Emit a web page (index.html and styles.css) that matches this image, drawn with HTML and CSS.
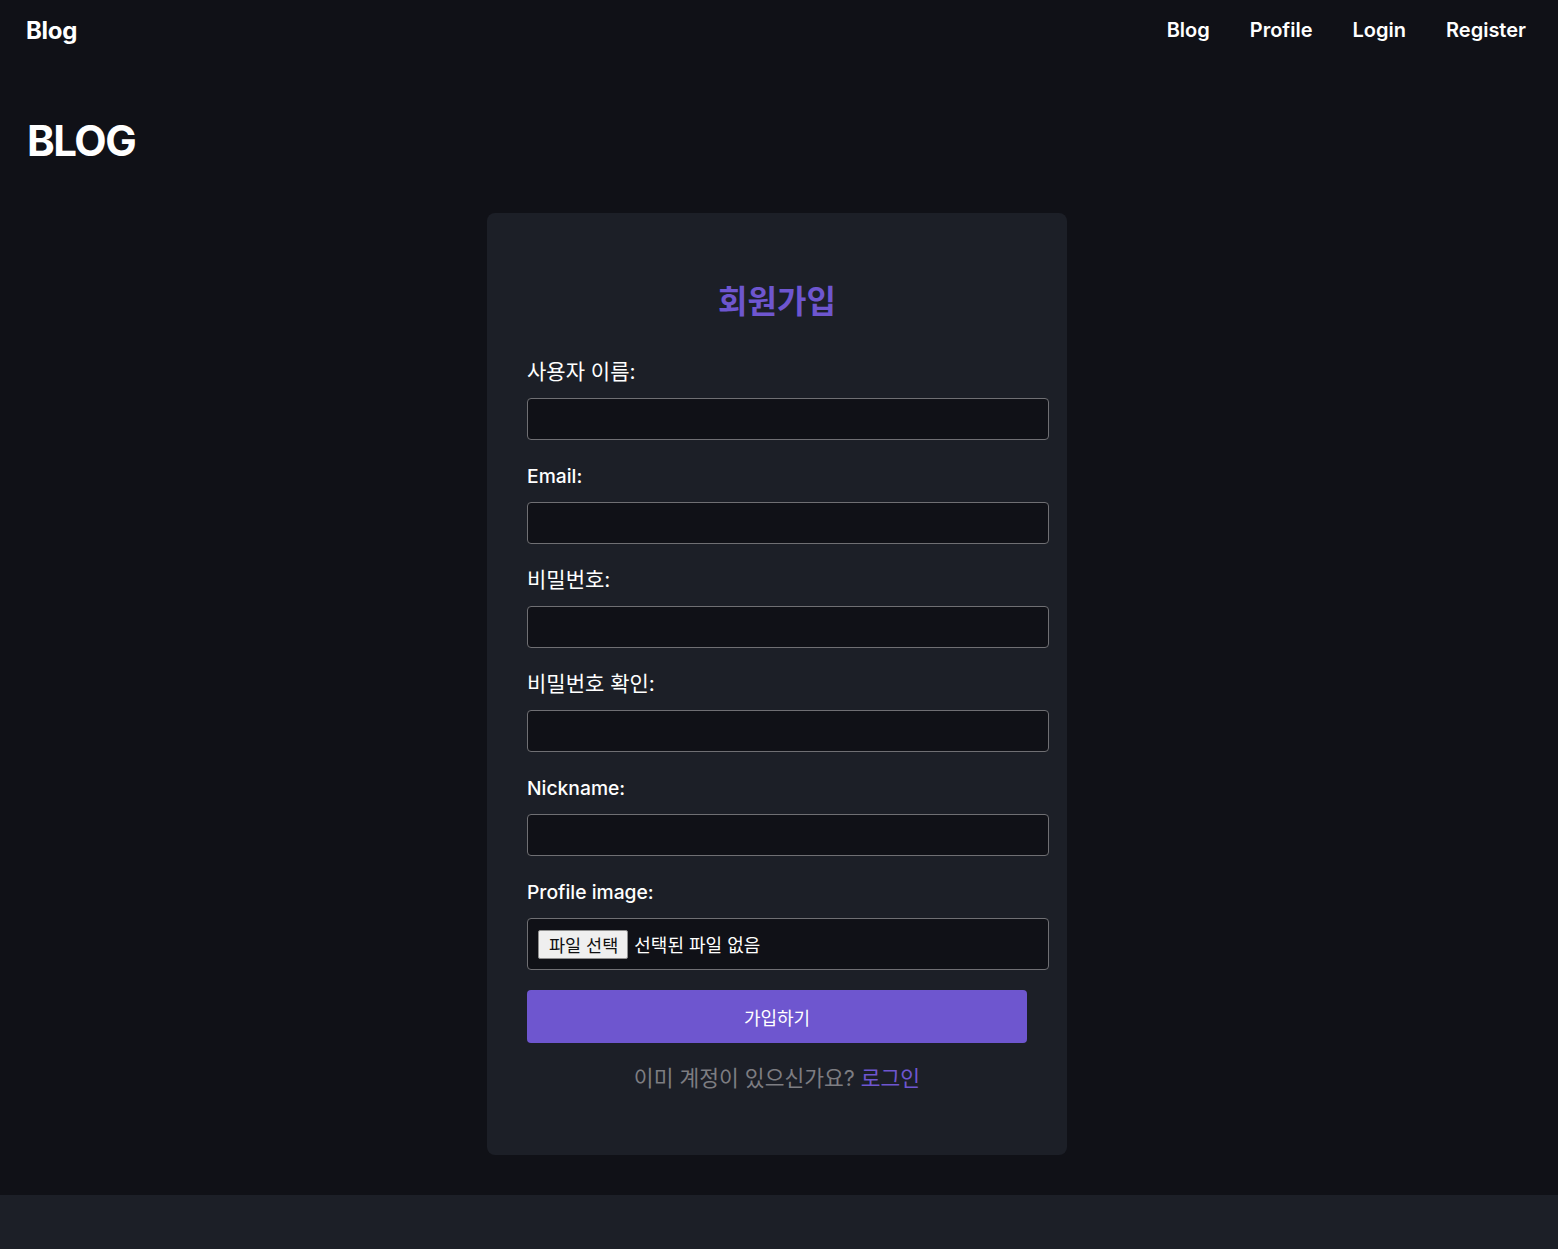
FILE: index.html
```html
<!DOCTYPE html>
<html lang="ko">
<head>
<meta charset="utf-8">
<title>회원가입 - Blog</title>
<link rel="stylesheet" href="styles.css">
</head>
<body>
<header class="topbar">
  <a class="logo" href="#">Blog</a>
  <nav class="nav">
    <a href="#">Blog</a>
    <a href="#">Profile</a>
    <a href="#">Login</a>
    <a href="#">Register</a>
  </nav>
</header>
<main class="main">
  <h1 class="page-title">BLOG</h1>
  <section class="card">
    <h2 class="card-title">회원가입</h2>
    <form class="form">
      <div class="group">
        <label class="label ko">사용자 이름:</label>
        <input class="input" type="text">
      </div>
      <div class="group">
        <label class="label">Email:</label>
        <input class="input" type="text">
      </div>
      <div class="group">
        <label class="label ko">비밀번호:</label>
        <input class="input" type="password">
      </div>
      <div class="group">
        <label class="label ko">비밀번호 확인:</label>
        <input class="input" type="password">
      </div>
      <div class="group">
        <label class="label">Nickname:</label>
        <input class="input" type="text">
      </div>
      <div class="group">
        <label class="label">Profile image:</label>
        <div class="file">
          <span class="file-btn">파일 선택</span>
          <span class="file-name">선택된 파일 없음</span>
        </div>
      </div>
      <button class="submit" type="button">가입하기</button>
    </form>
    <p class="switch">이미 계정이 있으신가요? <a href="#">로그인</a></p>
  </section>
</main>
<footer class="footer"></footer>
</body>
</html>
```
FILE: styles.css
```css
* { box-sizing: border-box; }
html, body { margin: 0; padding: 0; }
body {
  background: #101117;
  color: #ffffff;
  font-family: Inter, "Noto Sans CJK KR", sans-serif;
}
a { color: inherit; text-decoration: none; }

.topbar {
  height: 60px;
  display: flex;
  align-items: center;
  justify-content: space-between;
  padding: 0 32px 0 26px;
}
.logo {
  font-size: 24px;
  font-weight: 700;
  letter-spacing: -0.3px;
}
.nav {
  display: flex;
  gap: 40px;
}
.nav a {
  font-size: 20px;
  font-weight: 600;
}

.main {
  padding: 0 31px 0 27px;
}
.page-title {
  margin: 55px 0 46px;
  font-size: 42px;
  line-height: 52px;
  font-weight: 700;
  letter-spacing: -1.5px;
}

.card {
  width: 580px;
  margin: 0 auto;
  background: #1c1f27;
  border-radius: 8px;
  padding: 40px 40px 40px;
}
.card-title {
  margin: 31px 0 40px;
  text-align: center;
  font-size: 32px;
  line-height: 36px;
  font-weight: 600;
  color: #6e56cf;
}
.form {
  display: flex;
  flex-direction: column;
}
.group {
  display: flex;
  flex-direction: column;
  align-items: flex-start;
  margin-bottom: 24px;
}
.group:last-of-type { margin-bottom: 20px; }
.label {
  font-size: 19.3px;
  line-height: 24px;
  font-weight: 500;
  margin-bottom: 14px;
}
.label.ko {
  font-size: 21px;
  font-weight: 400;
}
.input {
  width: 522px;
  height: 42px;
  padding: 10px;
  background: #101117;
  border: 1px solid #6f6f73;
  border-radius: 4px;
  color: #ffffff;
  font-size: 16px;
  font-family: inherit;
}
.file {
  width: 522px;
  height: 52px;
  padding: 0 10px;
  background: #101117;
  border: 1px solid #6f6f73;
  border-radius: 4px;
  display: flex;
  align-items: center;
  gap: 6px;
}
.file-btn {
  display: inline-flex;
  align-items: center;
  height: 29px;
  padding: 0 9px 0 10px;
  background: #efefef;
  border: 1px solid #8f8f8f;
  border-radius: 2px;
  color: #111111;
  font-size: 17.5px;
  font-family: "Noto Sans CJK KR", sans-serif;
}
.file-name {
  color: #ffffff;
  font-size: 18px;
  font-family: "Noto Sans CJK KR", sans-serif;
}
.submit {
  width: 500px;
  height: 53px;
  border: none;
  border-radius: 4px;
  background: #6e56cf;
  color: #ffffff;
  font-size: 18px;
  font-family: inherit;
  cursor: pointer;
}
.switch {
  margin: 21px 0 23px;
  text-align: center;
  font-size: 21.5px;
  line-height: 28px;
  color: #7d7d82;
}
.switch a { color: #6e56cf; }

.footer {
  margin-top: 40px;
  height: 54px;
  background: #1c1f27;
}
```
